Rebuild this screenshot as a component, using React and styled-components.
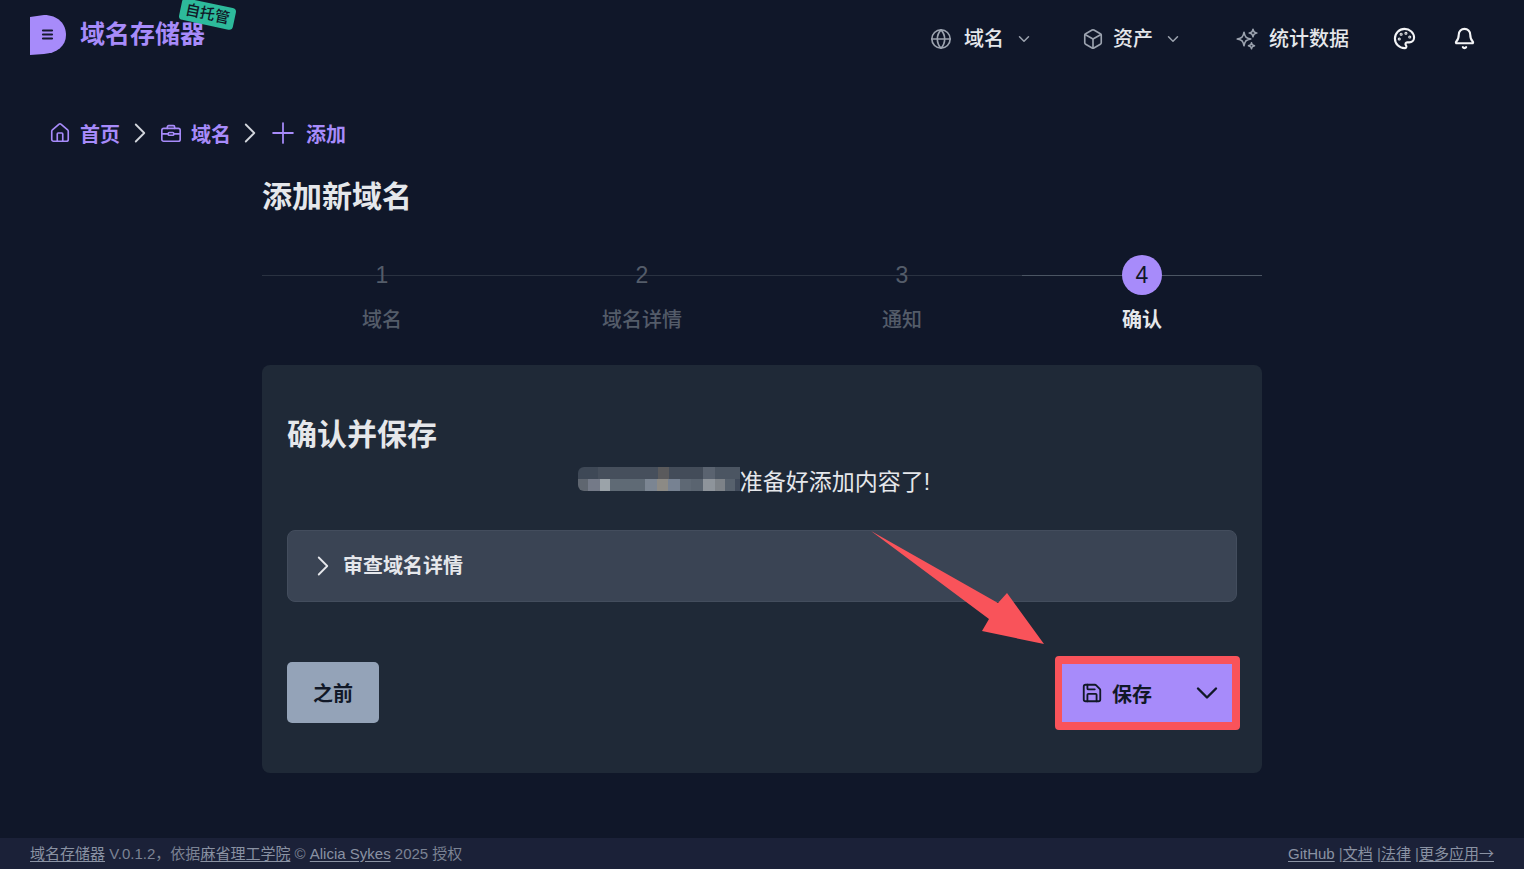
import React from "react";
import styled, { createGlobalStyle } from "styled-components";
import {
  Bell,
  Box,
  ChevronDown,
  ChevronRight,
  Globe,
  House,
  Palette,
  Plus,
  Save,
} from "lucide-react";

const GlobalStyle = createGlobalStyle`
  html, body {
    margin: 0;
    background: #101729;
    overflow: hidden;
  }
  * {
    box-sizing: border-box;
  }
`;

const Page = styled.div`
  position: relative;
  height: 869px;
  display: flex;
  flex-direction: column;
  background: #101729;
  font-family: "Liberation Sans", "Noto Sans CJK SC", sans-serif;
  color: #e5e7eb;
`;

const Header = styled.header`
  height: 78px;
  padding: 15px 11px 0 30px;
  display: flex;
  justify-content: space-between;
`;

const Brand = styled.div`
  position: relative;
  display: flex;
  align-items: center;
  gap: 14px;
  height: 40px;
`;

const BrandName = styled.span`
  font-size: 25px;
  font-weight: 700;
  color: #a78bfa;
  margin-top: -6px;
`;

const HostedTag = styled.span`
  position: absolute;
  left: 150px;
  top: -12px;
  padding: 0 5px;
  height: 22px;
  line-height: 22px;
  white-space: nowrap;
  font-size: 15px;
  font-weight: 500;
  color: #111827;
  background: #2dba9b;
  border-radius: 4px;
  transform: rotate(12deg);
`;

const Nav = styled.nav`
  display: flex;
  align-items: center;
  height: 47px;
`;

const NavItem = styled.div`
  display: flex;
  align-items: center;
  width: ${(p) => p.$width}px;
  font-size: 20px;
  font-weight: 500;
  color: #e5e7eb;
  svg {
    flex: none;
    color: #9ca3af;
  }
`;

const NavLabel = styled.span`
  margin: -2px 11px 0 ${(p) => p.$gap}px;
`;

const NavIconButton = styled.div`
  display: flex;
  width: 60px;
  color: #f3f4f6;
`;

const Breadcrumbs = styled.div`
  display: flex;
  align-items: center;
  height: 28px;
  margin-top: 41px;
  padding-left: 49px;
  font-size: 20px;
  font-weight: 700;
  color: #a78bfa;
`;

const Crumb = styled.span`
  display: flex;
  align-items: center;
  gap: ${(p) => p.$gap}px;
`;

const CrumbSep = styled.span`
  display: flex;
  margin: 0 ${(p) => p.$right}px 0 ${(p) => p.$left}px;
  color: #d1d5db;
`;

const Main = styled.main`
  width: 1000px;
  margin: 0 auto;
`;

const PageTitle = styled.h1`
  margin: 30px 0 0 0;
  font-size: 30px;
  line-height: 40px;
  font-weight: 700;
  color: #e5e7eb;
`;

const Steps = styled.ol`
  list-style: none;
  margin: 38px 0 0;
  padding: 0;
  display: grid;
  grid-template-columns: 240px 280px 240px 240px;
`;

const Step = styled.li`
  position: relative;
  display: flex;
  flex-direction: column;
  align-items: center;
  &::before {
    content: "";
    position: absolute;
    top: 20px;
    left: 0;
    right: 0;
    height: 1px;
    background: ${(p) => (p.$active ? "#4b5563" : "#2a3241")};
  }
`;

const StepDot = styled.span`
  position: relative;
  width: 40px;
  height: 40px;
  border-radius: 50%;
  display: flex;
  align-items: center;
  justify-content: center;
  font-size: 23px;
  background: ${(p) => (p.$active ? "#a78bfa" : "transparent")};
  color: ${(p) => (p.$active ? "#111827" : "#545c69")};
`;

const StepLabel = styled.span`
  margin-top: 11px;
  font-size: 20px;
  line-height: 28px;
  font-weight: ${(p) => (p.$active ? 700 : 500)};
  color: ${(p) => (p.$active ? "#e5e7eb" : "#545c69")};
`;

const Card = styled.section`
  margin-top: 31px;
  height: 408px;
  padding: 52px 25px 0;
  background: #1f2937;
  border-radius: 8px;
`;

const CardTitle = styled.h2`
  margin: 0;
  font-size: 30px;
  line-height: 36px;
  font-weight: 700;
  color: #e5e7eb;
`;

const Message = styled.p`
  display: flex;
  align-items: center;
  justify-content: center;
  margin: 12px 0 0;
  height: 30px;
  padding-right: 16px;
  font-size: 23px;
  color: #e5e7eb;
`;

const Mosaic = styled.span`
  display: block;
  width: 162px;
  height: 24px;
  margin-top: -2px;
  border-radius: 6px 0 0 6px;
  filter: blur(0.6px);
  background:
    linear-gradient(90deg, #5f6670 0 10px, #747a88 10px 22px, #9ba3a9 22px 32px, #5f6a75 32px 67px, #7b8592 67px 79px, #8c8a85 79px 90px, #778292 90px 102px, #5e6874 102px 113px, #5a6470 113px 125px, #8e949b 125px 137px, #7d8288 137px 147px, #57616d 147px 157px, #404a5a 157px 162px) 0 12px / 100% 12px no-repeat,
    linear-gradient(90deg, #3e4856 0 20px, #464f5c 20px 80px, #5a5a5c 80px 91px, #434c59 91px 125px, #5a6370 125px 137px, #4b5562 137px 162px) 0 0 / 100% 12px no-repeat;
`;

const Accordion = styled.div`
  display: flex;
  align-items: center;
  height: 72px;
  margin-top: 35px;
  padding-left: 18px;
  background: #3a4454;
  border: 1px solid #434d5d;
  border-radius: 8px;
  font-size: 20px;
  font-weight: 700;
  color: #e5e7eb;
  svg {
    color: #e5e7eb;
  }
`;

const AccordionLabel = styled.span`
  margin: -3px 0 0 3px;
`;

const Actions = styled.div`
  display: flex;
  align-items: center;
  justify-content: space-between;
  margin: 53px -3px 0 0;
`;

const BackButton = styled.button`
  width: 92px;
  height: 61px;
  border: 0;
  border-radius: 5px;
  background: #94a3b8;
  color: #111827;
  font: inherit;
  font-size: 20px;
  font-weight: 700;
`;

const SaveButton = styled.button`
  display: flex;
  align-items: center;
  width: 185px;
  height: 74px;
  margin-top: 1px;
  padding: 0 7px 0 19px;
  border: solid #f9535a;
  border-width: 8px 8px 8px 7px;
  border-radius: 4px;
  background: #a78bfa;
  color: #111827;
  font: inherit;
  font-size: 20px;
  font-weight: 700;
`;

const SaveLabel = styled.span`
  margin-left: 9px;
  flex: 1;
  text-align: left;
`;

const Arrow = styled.svg`
  position: absolute;
  left: 860px;
  top: 520px;
  width: 200px;
  height: 140px;
`;

const Footer = styled.footer`
  position: absolute;
  left: 0;
  right: 0;
  bottom: 0;
  height: 31px;
  padding: 0 30px 3px;
  display: flex;
  align-items: center;
  justify-content: space-between;
  background: #1b2138;
  font-size: 15px;
  color: #7b8394;
`;

const FooterLink = styled.a`
  color: #8a92a3;
  text-decoration: underline;
  text-underline-offset: 2px;
`;

const FooterArrow = styled.span`
  font-family: "Noto Sans CJK SC", sans-serif;
`;

const SparkleIcon = () => (
  <svg width="24" height="24" viewBox="0 0 24 24" fill="none" stroke="currentColor" strokeWidth="1.6" strokeLinejoin="round" aria-hidden="true">
    <path d="M9.813 15.904 9 18.75l-.813-2.846a4.5 4.5 0 0 0-3.09-3.09L2.25 12l2.846-.813a4.5 4.5 0 0 0 3.09-3.09L9 5.25l.813 2.846a4.5 4.5 0 0 0 3.09 3.09L15.75 12l-2.846.813a4.5 4.5 0 0 0-3.09 3.09ZM18.259 8.715 18 9.75l-.259-1.035a3.375 3.375 0 0 0-2.455-2.456L14.25 6l1.036-.259a3.375 3.375 0 0 0 2.455-2.456L18 2.25l.259 1.035a3.375 3.375 0 0 0 2.456 2.456L21.75 6l-1.035.259a3.375 3.375 0 0 0-2.456 2.456ZM16.894 20.567 16.5 21.75l-.394-1.183a2.25 2.25 0 0 0-1.423-1.423L13.5 18.75l1.183-.394a2.25 2.25 0 0 0 1.423-1.423l.394-1.183.394 1.183a2.25 2.25 0 0 0 1.423 1.423l1.183.394-1.183.394a2.25 2.25 0 0 0-1.423 1.423Z" />
  </svg>
);

const CaseIcon = () => (
  <svg width="22" height="22" viewBox="0 0 24 24" fill="none" stroke="currentColor" strokeWidth="1.8" strokeLinecap="round" strokeLinejoin="round" aria-hidden="true">
    <rect x="2" y="7" width="20" height="14" rx="2" />
    <path d="M8 7V5.5A1.5 1.5 0 0 1 9.5 4h5A1.5 1.5 0 0 1 16 5.5V7" />
    <path d="M2 13h7M15 13h7" />
    <rect x="9" y="11.5" width="6" height="3" rx="1" />
  </svg>
);

const navItems = [
  { label: "域名", Icon: Globe, gap: 12, width: 152 },
  { label: "资产", Icon: Box, gap: 9, width: 153 },
];

const steps = ["域名", "域名详情", "通知", "确认"];

export default function App() {
  return (
    <Page>
      <GlobalStyle />
      <Header>
        <Brand>
          <svg width="36" height="40" viewBox="0 0 36 40" aria-hidden="true">
            <path d="M0 2 L14 0 C28 0 36 9 36 20 C36 31 27 38 14 39 L0 40 Z" fill="#a78bfa" />
            <path d="M13 15.5h9M13 19.5h9M13 23.5h9" stroke="#161a2e" strokeWidth="2.2" strokeLinecap="round" />
          </svg>
          <BrandName>域名存储器</BrandName>
          <HostedTag>自托管</HostedTag>
        </Brand>
        <Nav>
          {navItems.map(({ label, Icon, gap, width }) => (
            <NavItem key={label} $width={width}>
              <Icon size={22} strokeWidth={1.8} />
              <NavLabel $gap={gap}>{label}</NavLabel>
              <ChevronDown size={18} strokeWidth={2} />
            </NavItem>
          ))}
          <NavItem $width={158}>
            <SparkleIcon />
            <NavLabel $gap={10}>统计数据</NavLabel>
          </NavItem>
          <NavIconButton>
            <Palette size={23} strokeWidth={2.2} />
          </NavIconButton>
          <NavIconButton>
            <Bell size={23} strokeWidth={2.2} />
          </NavIconButton>
        </Nav>
      </Header>

      <Breadcrumbs>
        <Crumb $gap={9}>
          <House size={22} strokeWidth={1.8} />
          首页
        </Crumb>
        <CrumbSep $left={3} $right={3}>
          <ChevronRight size={34} strokeWidth={1.3} />
        </CrumbSep>
        <Crumb $gap={9}>
          <CaseIcon />
          域名
        </Crumb>
        <CrumbSep $left={2} $right={-1}>
          <ChevronRight size={34} strokeWidth={1.3} />
        </CrumbSep>
        <Crumb $gap={6}>
          <Plus size={34} strokeWidth={1.25} />
          添加
        </Crumb>
      </Breadcrumbs>

      <Main>
        <PageTitle>添加新域名</PageTitle>
        <Steps>
          {steps.map((label, i) => (
            <Step key={label} $active={i === 3}>
              <StepDot $active={i === 3}>{i + 1}</StepDot>
              <StepLabel $active={i === 3}>{label}</StepLabel>
            </Step>
          ))}
        </Steps>
        <Card>
          <CardTitle>确认并保存</CardTitle>
          <Message>
            <Mosaic />
            准备好添加内容了!
          </Message>
          <Accordion>
            <ChevronRight size={34} strokeWidth={1.3} />
            <AccordionLabel>审查域名详情</AccordionLabel>
          </Accordion>
          <Actions>
            <BackButton>之前</BackButton>
            <SaveButton>
              <Save size={22} strokeWidth={2} />
              <SaveLabel>保存</SaveLabel>
              <ChevronDown size={36} strokeWidth={1.6} />
            </SaveButton>
          </Actions>
        </Card>
      </Main>

      <Arrow viewBox="860 520 200 140" aria-hidden="true">
        <polygon points="871,531 998,603 1007,593 1044,644 982,631 989,619" fill="#f9535a" />
      </Arrow>

      <Footer>
        <span>
          <FooterLink>域名存储器</FooterLink> V.0.1.2{"\uFF0C"}依据<FooterLink>麻省理工学院</FooterLink> © <FooterLink>Alicia Sykes</FooterLink> 2025 授权
        </span>
        <span>
          <FooterLink>GitHub</FooterLink> |<FooterLink>文档</FooterLink> |<FooterLink>法律</FooterLink> |<FooterLink>更多应用<FooterArrow>→</FooterArrow></FooterLink>
        </span>
      </Footer>
    </Page>
  );
}
